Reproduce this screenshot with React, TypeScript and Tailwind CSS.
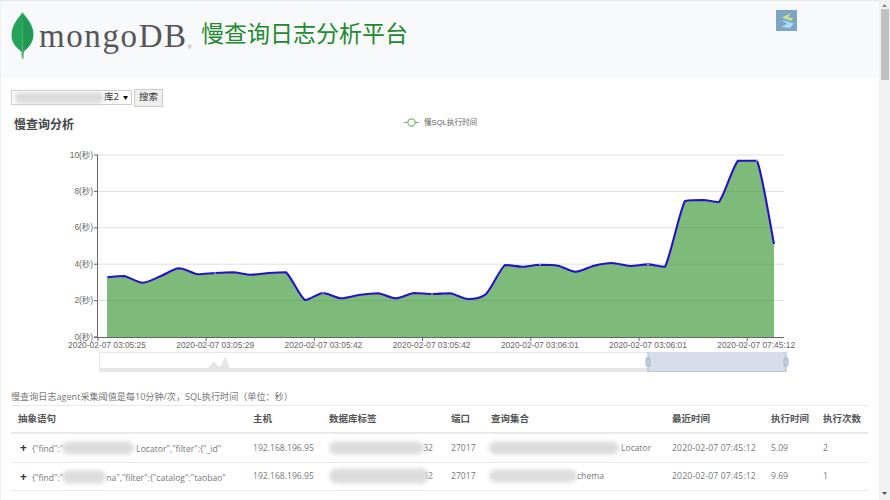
import React from "react";

const pts: [number, number][] = [
  [106, 277.3], [123, 276], [141.5, 282.7], [160, 276], [178, 268.3], [197, 274.3], [214, 273], [232, 272.3],
  [250, 274.7], [268, 273], [285, 272.3], [304, 300], [322, 293], [340, 298.3], [358, 295], [377, 293.2],
  [395, 298.3], [413, 293], [431, 294], [449, 293.3], [467, 299], [485, 294], [504, 265], [521, 266.7],
  [539, 264.7], [557, 265.7], [575, 271.7], [593, 265.7], [611, 263], [629, 266], [647, 264.4], [664, 266.7],
  [684, 201], [702, 200], [718, 202], [737, 160.7], [756, 160.7], [773, 244],
];

function smooth(p: [number, number][]) {
  let d = `M${p[0][0]} ${p[0][1]}`;
  for (let i = 0; i < p.length - 1; i++) {
    const a = p[Math.max(0, i - 1)], b = p[i], c = p[i + 1], e = p[Math.min(p.length - 1, i + 2)];
    const k = 0.14;
    let y1 = b[1] + (c[1] - a[1]) * k, y2 = c[1] - (e[1] - b[1]) * k;
    const lo = Math.min(b[1], c[1]), hi = Math.max(b[1], c[1]);
    y1 = Math.min(hi, Math.max(lo, y1));
    y2 = Math.min(hi, Math.max(lo, y2));
    d += ` C${b[0] + (c[0] - a[0]) * k} ${y1} ${c[0] - (e[0] - b[0]) * k} ${y2} ${c[0]} ${c[1]}`;
  }
  return d;
}

const line = smooth(pts);
const area = `${line} L773 337 L106 337 Z`;
const ticks = ["2020-02-07 03:05:25", "2020-02-07 03:05:29", "2020-02-07 03:05:42", "2020-02-07 03:05:42", "2020-02-07 03:06:01", "2020-02-07 03:06:01", "2020-02-07 07:45:12"];
const markers: [number, number][] = [[106, 277.3], [214, 273], [322, 293], [431, 294], [539, 264.7], [647, 264.4], [756, 160.7]];

function Chart() {
  const ff = "'Liberation Sans','Noto Sans CJK SC',sans-serif";
  return (
    <svg width="878" height="268" viewBox="0 112 878 268" className="block" fontFamily={ff}>
      <line x1="403" x2="418" y1="122.5" y2="122.5" stroke="#7dba73" strokeWidth="1.2" />
      <circle cx="410.5" cy="122.5" r="3.6" fill="#fff" stroke="#7dba73" strokeWidth="1.2" />
      <text x="423" y="125" fontSize="7.6" fill="#666">慢SQL执行时间</text>
      {[0, 2, 4, 6, 8, 10].map((v) => {
        const y = 337 - v * 18.2;
        return (
          <g key={v}>
            {v > 0 && <line x1="97" x2="783" y1={y} y2={y} stroke="#dfdfdf" />}
            <line x1="93" x2="97" y1={y} y2={y} stroke="#666" />
            <text x="92" y={y + 2.5} textAnchor="end" fontSize="8.4" fill="#666">{v}(秒)</text>
          </g>
        );
      })}
      <path d={area} fill="#2e9128" fillOpacity="0.62" />
      <path d={line} fill="none" stroke="#2412c8" strokeWidth="2.1" />
      {markers.map(([x, y]) => (
        <circle key={x} cx={x} cy={y} r="0.8" fill="#cfd8e8" />
      ))}
      <line x1="96.5" x2="96.5" y1="155" y2="337" stroke="#666" />
      <line x1="93" x2="783" y1="337.5" y2="337.5" stroke="#666" />
      {ticks.map((t, i) => {
        const x = 97 + i * 108.2;
        return (
          <g key={i}>
            <line x1={x} x2={x} y1="337" y2="341" stroke="#666" />
            <text x={x + 9} y="348" textAnchor="middle" fontSize="8.4" fill="#666">{t}</text>
          </g>
        );
      })}
      <rect x="98.5" y="352.5" width="686" height="19" fill="#fff" stroke="#e6e6e6" />
      <rect x="98.5" y="368" width="686" height="4" fill="#e6e6e6" />
      <path d="M207 368 L213 361 L217 366 L220 366 L224.500 356 L229 368 Z" fill="#e6e6e6" />
      <rect x="647" y="352" width="138" height="20" fill="#d6dde9" />
      <line x1="647" x2="647" y1="352" y2="372" stroke="#a9b6cc" />
      <line x1="785" x2="785" y1="352" y2="372" stroke="#a9b6cc" />
      <line x1="647" x2="785" y1="371.500" y2="371.500" stroke="#bcc7d9" />
      <rect x="645" y="358" width="4" height="8" rx="1" fill="#c5d0e0" stroke="#8fa0b8" strokeWidth="0.7" />
      <rect x="783" y="358" width="4" height="8" rx="1" fill="#c5d0e0" stroke="#8fa0b8" strokeWidth="0.7" />
    </svg>
  );
}

function Leaf() {
  return (
    <svg width="24" height="48" viewBox="0 0 24 48" className="block">
      <path d="M11.500 0 C13 4 23 11 22.500 23 C22 33 15 37 12.800 40 L12.300 46.500 L10.900 46.500 L10.500 40 C8 37 0.500 33 0.500 23 C0.500 11 10 4 11.500 0 Z" fill="#26a35a" />
      <path d="M11.500 3 L12.300 46.500 L10.900 46.500 Z" fill="#8fb78f" fillOpacity="0.6" />
      <path d="M12 4 C14 8 22.500 13 22 23 C21.500 32 15 36 12.500 39 Z" fill="#1e8f4c" fillOpacity="0.55" />
    </svg>
  );
}

function Blur({ w, h = "h-[13px]" }: { w: string; h?: string }) {
  return <span className={`absolute top-1/2 -translate-y-1/2 ${w} ${h} rounded-full bg-[#dcdcdc] blur-[2px]`} />;
}

const cols = "grid grid-cols-[235px_76px_122px_40px_181px_99px_52px_45px] pl-[7px]";

export default function App() {
  return (
    <div className="flex w-[890px] h-[500px] overflow-hidden bg-white font-['Open_Sans','Noto_Sans_CJK_SC',sans-serif] text-[#666]">
      <main className="w-[879px] shrink-0 border-l border-[#eeeeee]">
        <header className="h-[78px] border-t border-[#e6e6e6] bg-[#f8f9fb] flex relative">
          <div className="pt-[11px] pl-[10px]"><Leaf /></div>
          <div className="w-[166px] shrink-0 pt-[14px] pl-[4px] flex items-start">
            <span className="font-['Liberation_Serif',serif] text-[33px] leading-[42px] tracking-[1.6px] text-[#55565a]">mongoDB</span>
            <span className="text-[5px] mt-[29px] text-[#888] font-['Liberation_Sans',sans-serif]">®</span>
          </div>
          <h1 className="mt-[17px] text-[23px] leading-[30px] text-[#23892f]">慢查询日志分析平台</h1>
          <svg width="21" height="21" viewBox="0 0 21 21" className="absolute left-[775px] top-[9px]">
            <rect width="21" height="21" fill="#7ea6c4" />
            <path d="M15 3 L6 7.500 L15 11 L17 8 L12 7.500 Z" fill="#cde28a" />
            <path d="M6 10 L18 13.500 L14 18 L5 17 L11 14 Z" fill="#a9ddf7" />
          </svg>
        </header>

        <div className="flex items-center pl-[10px] mt-[10px] h-[19px]">
          <div className="relative w-[121px] h-[15px] border border-[#cccccc] bg-white flex items-center justify-end pr-[3px] text-[9.500px] text-[#333]">
            <Blur w="left-[2px] w-[90px]" h="h-[12px]" />
            <span>库2</span>
            <span className="ml-[4px] text-[5px] text-black">▼</span>
          </div>
          <button className="ml-[2px] w-[29px] h-[18px] border border-[#cccccc] bg-[#efefef] text-[9.500px] text-[#333]">搜索</button>
        </div>

        <div className="h-[5px] pl-[13px]">
          <h2 className="pt-[9px] text-[12px] leading-[18px] font-bold text-[#444]">慢查询分析</h2>
        </div>
        <Chart />

        <p className="pl-[10px] mt-[10px] text-[9.100px] leading-[14px] text-[#777]">慢查询日志agent采集阈值是每10分钟/次，SQL执行时间（单位：秒）</p>

        <div className="ml-[10px] w-[857px] mt-[1px] text-[9.500px]">
          <div className={`${cols} h-[29px] items-center border-t border-b-2 border-[#e9e9e9] font-semibold text-[#555]`}>
            <span>抽象语句</span><span>主机</span><span>数据库标签</span><span>端口</span><span>查询集合</span><span>最近时间</span><span>执行时间</span><span>执行次数</span>
          </div>
          <div className={`${cols} h-[29px] items-center border-b border-[#e9e9e9] text-[#777] text-[8.600px]`}>
            <span className="relative whitespace-nowrap pl-[2px]"><b className="text-[#333] text-[12px] mr-[5px]">+</b>{'{"find":"'}<span className="inline-block w-[73px]" />{'Locator","filter":{"_id"'}<Blur w="left-[44px] w-[72px]" /></span>
            <span>192.168.196.95</span>
            <span className="relative text-right pr-[18px]">32<Blur w="left-0 w-[95px]" /></span>
            <span>27017</span>
            <span className="relative pl-[130px]">Locator<Blur w="-left-[2px] w-[130px]" /></span>
            <span className="tracking-[0.15px]">2020-02-07 07:45:12</span><span>5.09</span><span>2</span>
          </div>
          <div className={`${cols} h-[28px] items-center border-b border-[#e9e9e9] text-[#777] text-[8.600px]`}>
            <span className="relative whitespace-nowrap pl-[2px]"><b className="text-[#333] text-[12px] mr-[5px]">+</b>{'{"find":"'}<span className="inline-block w-[43px]" />{'na","filter":{"catalog":"taobao"'}<Blur w="left-[44px] w-[44px]" /></span>
            <span>192.168.196.95</span>
            <span className="relative text-right pr-[18px]">32<Blur w="left-0 w-[100px]" h="h-[15px]" /></span>
            <span>27017</span>
            <span className="relative pl-[86px]">chema<Blur w="-left-[2px] w-[88px]" /></span>
            <span className="tracking-[0.15px]">2020-02-07 07:45:12</span><span>9.69</span><span>1</span>
          </div>
        </div>
      </main>

      <aside className="w-[11px] shrink-0 bg-[#f1f1f1] flex flex-col items-center">
        <svg width="7" height="5" viewBox="0 0 7 5" className="mt-[3px]"><path d="M3.500 1 L6 4 H1 Z" fill="#888" /></svg>
        <div className="mt-[1px] w-[8px] h-[71px] bg-[#c1c1c1]" />
        <svg width="7" height="5" viewBox="0 0 7 5" className="mt-auto mb-[4px]"><path d="M3.500 4 L6 1 H1 Z" fill="#555" /></svg>
      </aside>
    </div>
  );
}
